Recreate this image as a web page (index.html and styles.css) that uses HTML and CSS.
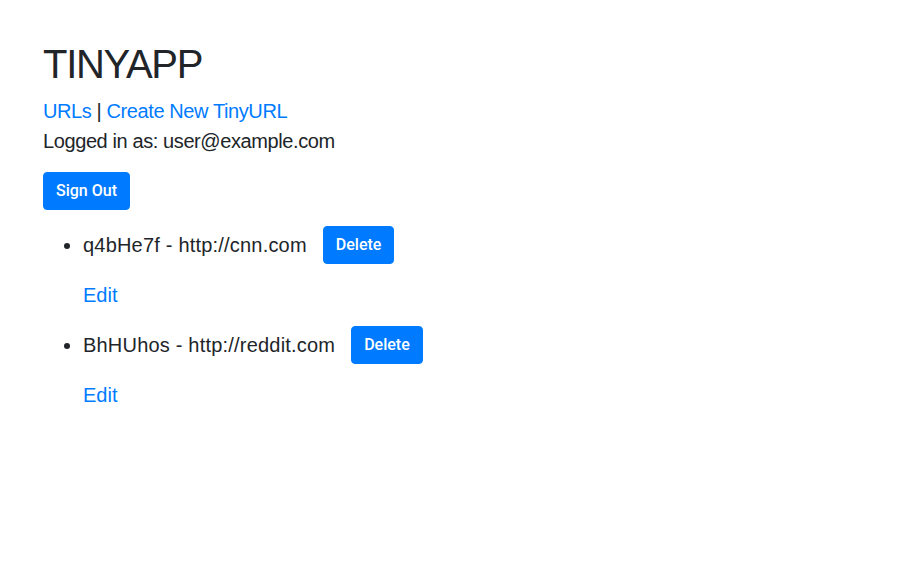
FILE: index.html
```html
<!DOCTYPE html>
<html>
<head>
<meta charset="utf-8">
<link rel="stylesheet" href="styles.css">
</head>
<body>
<main class="page">
  <h1 class="title">TINYAPP</h1>
  <nav class="nav"><a href="#">URLs</a> | <a href="#">Create New TinyURL</a></nav>
  <p class="login">Logged in as: user@example.com</p>
  <button class="btn">Sign Out</button>
  <ul class="urls">
    <li class="url">
      <div class="row"><span class="item">q4bHe7f - http://cnn.com</span><button class="btn">Delete</button></div>
      <a class="edit" href="#">Edit</a>
    </li>
    <li class="url">
      <div class="row"><span class="item">BhHUhos - http://reddit.com</span><button class="btn">Delete</button></div>
      <a class="edit" href="#">Edit</a>
    </li>
  </ul>
</main>
</body>
</html>
```
FILE: styles.css
```css
html, body { margin: 0; padding: 0; background: #fff; }
body {
  font-family: "Liberation Sans", Arial, sans-serif;
  color: #212529;
  font-size: 20px;
  line-height: 30px;
}
.page { padding: 40px 43px; display: flex; flex-direction: column; align-items: flex-start; }
.title { font-size: 40px; line-height: 48px; font-weight: 400; margin: 0 0 8px; letter-spacing: -1.3px; }
a { color: #007bff; text-decoration: none; }
.nav { margin: 0; letter-spacing: -0.4px; }
.login { margin: 0 0 16px; letter-spacing: -0.4px; }
.btn {
  font-family: Roboto, "Liberation Sans", Arial, sans-serif;
  font-size: 16px;
  font-weight: 500;
  line-height: 24px;
  padding: 6px 12px;
  border: 1px solid #007bff;
  background: #007bff;
  color: #fff;
  border-radius: 4px;
}
.urls { margin: 16px 0 0; padding-left: 40px; }
.url { display: flex; flex-direction: column; align-items: flex-start; padding-bottom: 16px; list-style: none; }
.row { display: flex; align-items: center; gap: 16px; margin-bottom: 16px; }
.item { display: list-item; list-style: disc; letter-spacing: 0.2px; }
```
